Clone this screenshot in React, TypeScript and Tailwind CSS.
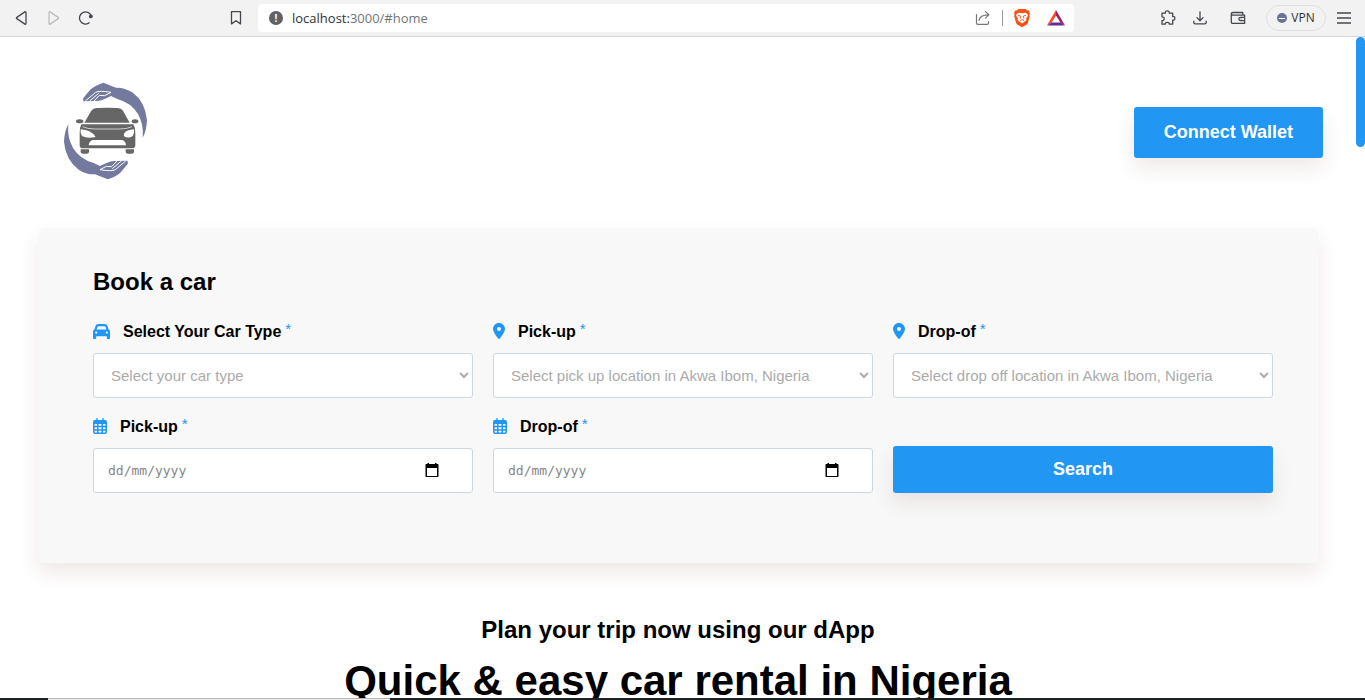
import React from "react";
import { FaCar, FaLocationDot } from "react-icons/fa6";

function BackIcon() {
  return (
    <svg width="16" height="18" viewBox="0 0 16 18" fill="none" stroke="currentColor" strokeWidth="1.3" strokeLinejoin="round">
      <path d="M12 3.4v11.2c0 .6-.6.8-1.1.5L2.8 9.6c-.5-.3-.5-.9 0-1.2l8.1-5.5c.5-.3 1.1-.1 1.1.5z" />
    </svg>
  );
}

function ForwardIcon() {
  return (
    <svg width="16" height="18" viewBox="0 0 16 18" fill="none" stroke="currentColor" strokeWidth="1.3" strokeLinejoin="round">
      <path d="M3 3.4v11.2c0 .6.6.8 1.1.5l8.1-5.5c.5-.3.5-.9 0-1.2L4.1 2.9C3.6 2.6 3 2.8 3 3.4z" />
    </svg>
  );
}

function ReloadIcon() {
  return (
    <svg width="16" height="18" viewBox="0 0 16 18" fill="none" stroke="currentColor" strokeWidth="1.3">
      <path d="M11.6 13.6A6.1 6.1 0 1 1 13.3 7" />
      <circle cx="12.8" cy="7.4" r="1.9" fill="currentColor" stroke="none" />
    </svg>
  );
}

function BookmarkIcon() {
  return (
    <svg width="16" height="18" viewBox="0 0 16 18" fill="none" stroke="currentColor" strokeWidth="1.3" strokeLinejoin="round">
      <path d="M3.5 2.6h9v12.3L8 11.7l-4.5 3.2z" />
    </svg>
  );
}

function ShareIcon() {
  return (
    <svg width="18" height="18" viewBox="0 0 18 18" fill="none" stroke="currentColor" strokeWidth="1.2" strokeLinecap="round" strokeLinejoin="round">
      <path d="M2.5 5.5v8.6c0 .8.5 1.3 1.3 1.3h9.4c.8 0 1.3-.5 1.3-1.3v-1.6" />
      <path d="M5 11.5c.4-3.8 3.4-5.7 9.5-5.7M11.5 2.6l3.3 3.2-3.3 3.3" />
    </svg>
  );
}

function BraveIcon() {
  return (
    <svg width="18" height="20" viewBox="0 0 18 20">
      <path fill="#fb5013" d="M5.5 1h7l1.3 1.3 2.2.2.9 2.7-.5 1.4.4 1.6-1.9 6.6c-.3.9-.8 1.5-1.5 2L9 19.2l-4.4-2.4c-.7-.5-1.2-1.1-1.5-2L1.2 8.2l.4-1.6-.5-1.4.9-2.7 2.2-.2z" />
      <path fill="#fff" d="M4.2 5.2 7 4.7l2 .5 2-.5 2.8.5 1.2 2.2-1.9 3 .3 1.6-2.4 2-2 1.6-2-1.6-2.4-2 .3-1.6-1.9-3z" />
      <path fill="none" stroke="#fb5013" strokeWidth=".9" d="m5 7.3 2.6.7M13 7.3l-2.6.7M7.6 8l-.5 2.7M10.4 8l.5 2.7M7 12.6l2-1 2 1" />
    </svg>
  );
}

function RewardsIcon() {
  return (
    <svg width="18" height="18" viewBox="0 0 18 18">
      <path fill="#ff4724" d="M9 1v5.5L4.6 13.6 0 16.5z" />
      <path fill="#9e1f63" d="m9 1 9 15.5-4.6-2.9L9 6.5z" />
      <path fill="#662d91" d="M0 16.5 4.6 13.6h8.8l4.6 2.9z" />
    </svg>
  );
}

function PuzzleIcon() {
  return (
    <svg width="18" height="18" viewBox="0 0 18 18" fill="none" stroke="currentColor" strokeWidth="1.3" strokeLinejoin="round">
      <path d="M3 4.2h3.4c-.3-1.5.6-2.4 1.9-2.4s2.2.9 1.9 2.4h3.5v3.3c1.3-.3 2.2.6 2.2 1.8s-.9 2.1-2.2 1.8v4.1h-3.4c.1-1.2-.8-1.9-2-1.9s-2.1.7-2 1.9H3v-3.6c1.3.1 2.2-.7 2.2-1.9S4.3 7.7 3 7.8z" />
    </svg>
  );
}

function DownloadIcon() {
  return (
    <svg width="18" height="18" viewBox="0 0 18 18" fill="none" stroke="currentColor" strokeWidth="1.3" strokeLinecap="round" strokeLinejoin="round">
      <path d="M9 3v8.5M5.9 8.6 9 11.7l3.1-3.1M2.8 12.2v1.3c0 .8.6 1.4 1.4 1.4h9.6c.8 0 1.4-.6 1.4-1.4v-1.3" />
    </svg>
  );
}

function WalletIcon() {
  return (
    <svg width="18" height="18" viewBox="0 0 18 18" fill="none" stroke="currentColor" strokeWidth="1.3" strokeLinejoin="round">
      <path d="M13.8 5.6V3.5H3.9c-1 0-1.6.5-1.6 1.3s.6 1.3 1.6 1.3h11.7v8.3H3.6c-.8 0-1.3-.5-1.3-1.3V4.8M15.6 8.4h-4.2c-.9 0-1.5.7-1.5 1.6s.6 1.6 1.5 1.6h4.2" />
      <circle cx="12.2" cy="10" r=".6" fill="currentColor" stroke="none" />
    </svg>
  );
}

function MenuIcon() {
  return (
    <svg width="16" height="18" viewBox="0 0 16 18" stroke="currentColor" strokeWidth="1.3">
      <path d="M1 4h14M1 9h14M1 14h14" />
    </svg>
  );
}

function CalendarGridIcon() {
  return (
    <svg width="14" height="16" viewBox="0 0 448 512" fill="currentColor">
      <path d="M152 24c0-13.3-10.7-24-24-24s-24 10.7-24 24V64H64C28.7 64 0 92.7 0 128v320c0 35.3 28.7 64 64 64H384c35.3 0 64-28.7 64-64V128c0-35.3-28.7-64-64-64H344V24c0-13.3-10.7-24-24-24s-24 10.7-24 24V64H152V24zM48 192h80v56H48V192zm0 104h80v64H48V296zm128 0h96v64H176V296zm144 0h80v64H320V296zm80-48H320V192h80v56zm0 160v40c0 8.8-7.2 16-16 16H320V408h80zm-128 0v56H176V408h96zm-144 0v56H64c-8.8 0-16-7.2-16-16V408h80zm144-160H176V192h96v56z" />
    </svg>
  );
}

function CarrierHand() {
  return (
    <>
      <path fill="#747a9f" d="M100 84 L122 58 Q136 46 160 38 L198 53 Q224 52 247 67 Q286 96 291 150 Q290 182 278 203 Q282 164 264 132 Q243 98 202 87 L183 78 Q168 86 156 90 Q148 93 139 93 L101 94 Q98 90 100 84z" />
      <path fill="none" stroke="#fff" strokeWidth="3" d="M106 93 L137 67 Q148 61 183 67 L164 77 L148 76 L132 93 M119 93 L146 70" />
    </>
  );
}

function Logo() {
  return (
    <svg width="110" height="120" viewBox="0 0 330 360" role="img" aria-label="Car rental">
      <CarrierHand />
      <g transform="rotate(180 166.5 183)">
        <CarrierHand />
      </g>
      <g fill="#666">
        <path d="M103 158 L124 122 Q129 115 140 114 Q172 112 203 114 Q214 115 219 122 L239 158z" />
        <path d="M94 163 H250 Q257 174 256 190 V226 Q256 234 248 235 H97 Q89 234 89 226 V190 Q88 174 94 163z" />
        <ellipse cx="89" cy="154" rx="11" ry="6" />
        <ellipse cx="255" cy="154" rx="10" ry="6" />
        <path d="M92 238 H117 V245 Q117 251 110 251 H99 Q92 251 92 245zM227 238 H252 V245 Q252 251 245 251 H234 Q227 251 227 245z" />
      </g>
      <path d="M98 170 Q112 177 135 177 H209 Q232 177 246 170" stroke="#fff" strokeWidth="2" fill="none" />
      <path fill="#fff" d="M92 178 Q124 180 137 201 Q112 207 96 198 Q90 190 92 178zM252 178 Q220 180 221 198 Q236 207 248 198 Q254 190 252 178z" />
      <path fill="#fff" d="M130 210 H215 Q227 212 228 226 H116 Q117 212 130 210z" />
    </svg>
  );
}

function BrowserBar() {
  return (
    <header className="flex h-[37px] shrink-0 items-center border-b border-[#d3d6da] bg-[#f2f2f2] font-['Open_Sans',sans-serif] text-[#45484d]">
      <nav aria-label="Browser" className="flex items-center gap-4 pl-[14px]">
        <button aria-label="Back"><BackIcon /></button>
        <button aria-label="Forward" className="text-[#bdbdbd]"><ForwardIcon /></button>
        <button aria-label="Reload"><ReloadIcon /></button>
      </nav>
      <button aria-label="Bookmark" className="ml-[134px]"><BookmarkIcon /></button>
      <div className="ml-[14px] flex h-7 flex-1 items-center rounded bg-white pr-[9px] pl-[11px]">
        <span className="flex size-[14px] items-center justify-center rounded-full bg-[#5f6368] text-[10px] leading-none font-bold text-white">!</span>
        <p className="ml-[9px] flex-1 pt-px text-[13px] text-[#70757a]"><span className="text-[#303236]">localhost:</span>3000/#home</p>
        <button aria-label="Share" className="text-[#777]"><ShareIcon /></button>
        <span className="mr-[10px] ml-[10px] h-4 w-px bg-[#999]" />
        <button aria-label="Shields"><BraveIcon /></button>
        <button aria-label="Rewards" className="ml-4"><RewardsIcon /></button>
      </div>
      <div className="ml-[85px] flex items-center">
        <button aria-label="Extensions"><PuzzleIcon /></button>
        <button aria-label="Downloads" className="ml-[14px]"><DownloadIcon /></button>
        <button aria-label="Wallet" className="ml-5"><WalletIcon /></button>
        <button className="ml-[19px] flex h-[26px] w-[60px] items-center justify-center gap-1 rounded-full border border-[#e0e0e0] text-xs text-[#303236]">
          <span className="flex size-[10px] items-center justify-center rounded-full bg-[#6b7394]"><span className="h-px w-[6px] bg-white" /></span>
          VPN
        </button>
        <button aria-label="Menu" className="mr-[13px] ml-[10px]"><MenuIcon /></button>
      </div>
    </header>
  );
}

type FieldProps = {
  id: string;
  label: string;
  icon: React.ReactNode;
  children: React.ReactNode;
};

function Field({ id, label, icon, children }: FieldProps) {
  return (
    <div>
      <label htmlFor={id} className="flex h-6 items-center text-base font-bold text-black">
        <span className="mr-[13px] text-[#2196f3]">{icon}</span>
        <span className="pt-0.5">{label}</span>
        <span className="ml-1 self-start text-[15px] leading-5 font-normal text-[#2196f3]">*</span>
      </label>
      <div className="mt-[10px]">{children}</div>
    </div>
  );
}

function SelectBox({ id, placeholder, options }: { id: string; placeholder: string; options: string[] }) {
  return (
    <select id={id} defaultValue="" className="block h-[45px] w-full rounded-[3px] border border-[#ccd7e6] bg-white px-[13px] text-[15px] text-[#ababab]">
      <option value="">{placeholder}</option>
      {options.map((option) => (
        <option key={option}>{option}</option>
      ))}
    </select>
  );
}

function DateBox({ id }: { id: string }) {
  return (
    <div className="flex h-[45px] items-center rounded-[3px] border border-[#ccd7e6] bg-white pr-[33px] pl-[14px]">
      <input id={id} type="text" placeholder="dd/mm/yyyy" className="min-w-0 flex-1 font-['DejaVu_Sans_Mono',monospace] text-[13px] outline-none placeholder:text-[#858585]" />
      <button type="button" aria-label="Open calendar">
        <svg width="14" height="15" viewBox="0 0 14 15">
          <path d="M2.5 0H4v1h6V0h1.5v1h1c.7 0 1 .4 1 1v11c0 .7-.3 1-1 1h-11c-.7 0-1-.3-1-1V2c0-.6.3-1 1-1h1zM2 5v8h10V5z" />
        </svg>
      </button>
    </div>
  );
}

const towns = ["Uyo", "Eket", "Ikot Ekpene", "Oron"];
const carTypes = ["Saloon", "SUV", "Bus"];

function BookingForm() {
  return (
    <form className="mr-[37px] ml-[38px] rounded-md bg-[#f8f8f8] pt-[38px] pr-[46px] pb-[70px] pl-[55px] shadow-[0_10px_20px_0_rgba(100,40,20,0.1)]">
      <h2 className="text-2xl leading-8 font-bold">Book a car</h2>
      <div className="mt-[21px] grid grid-cols-3 items-end gap-x-5 gap-y-4">
        <Field id="car-type" label="Select Your Car Type" icon={<FaCar size={17} />}>
          <SelectBox id="car-type" placeholder="Select your car type" options={carTypes} />
        </Field>
        <Field id="pickup-place" label="Pick-up" icon={<FaLocationDot className="h-4 w-3" />}>
          <SelectBox id="pickup-place" placeholder="Select pick up location in Akwa Ibom, Nigeria" options={towns} />
        </Field>
        <Field id="dropoff-place" label="Drop-of" icon={<FaLocationDot className="h-4 w-3" />}>
          <SelectBox id="dropoff-place" placeholder="Select drop off location in Akwa Ibom, Nigeria" options={towns} />
        </Field>
        <Field id="pickup-date" label="Pick-up" icon={<CalendarGridIcon />}>
          <DateBox id="pickup-date" />
        </Field>
        <Field id="dropoff-date" label="Drop-of" icon={<CalendarGridIcon />}>
          <DateBox id="dropoff-date" />
        </Field>
        <button type="button" className="h-[47px] rounded-[3px] bg-[#2196f3] pb-0.5 text-lg font-bold text-white shadow-[0_10px_20px_0_rgba(100,40,20,0.1)]">
          Search
        </button>
      </div>
    </form>
  );
}

export default function App() {
  return (
    <div className="flex h-screen flex-col bg-white font-['Liberation_Sans',Arial,sans-serif] text-black">
      <BrowserBar />
      <div className="flex min-h-0 flex-1">
        <main className="min-w-0 flex-1 overflow-hidden">
          <div className="flex items-start justify-between pt-[33px] pr-[33px] pb-[38px] pl-[50px]">
            <a href="#home"><Logo /></a>
            <button className="mt-[37px] h-[51px] rounded-[3px] bg-[#2196f3] px-[30px] pb-0.5 text-lg font-bold text-white shadow-[0_10px_20px_0_rgba(100,40,20,0.1)]">
              Connect Wallet
            </button>
          </div>
          <BookingForm />
          <section className="pt-[51px] text-center">
            <p className="text-2xl leading-8 font-bold">Plan your trip now using our dApp</p>
            <h1 className="mt-[10px] text-[42px] leading-[50px] font-bold">Quick &amp; easy car rental in Nigeria</h1>
          </section>
        </main>
        <div className="w-[9px] shrink-0">
          <div className="h-[110px] rounded-full bg-[#2196f3]" />
        </div>
      </div>
      <footer className="flex h-[2px] shrink-0 bg-[#1c2222]">
        <div className="w-12" />
        <div className="w-[342px] border-t border-[#b5b5b5] bg-[#f0f0f0]" />
      </footer>
    </div>
  );
}
